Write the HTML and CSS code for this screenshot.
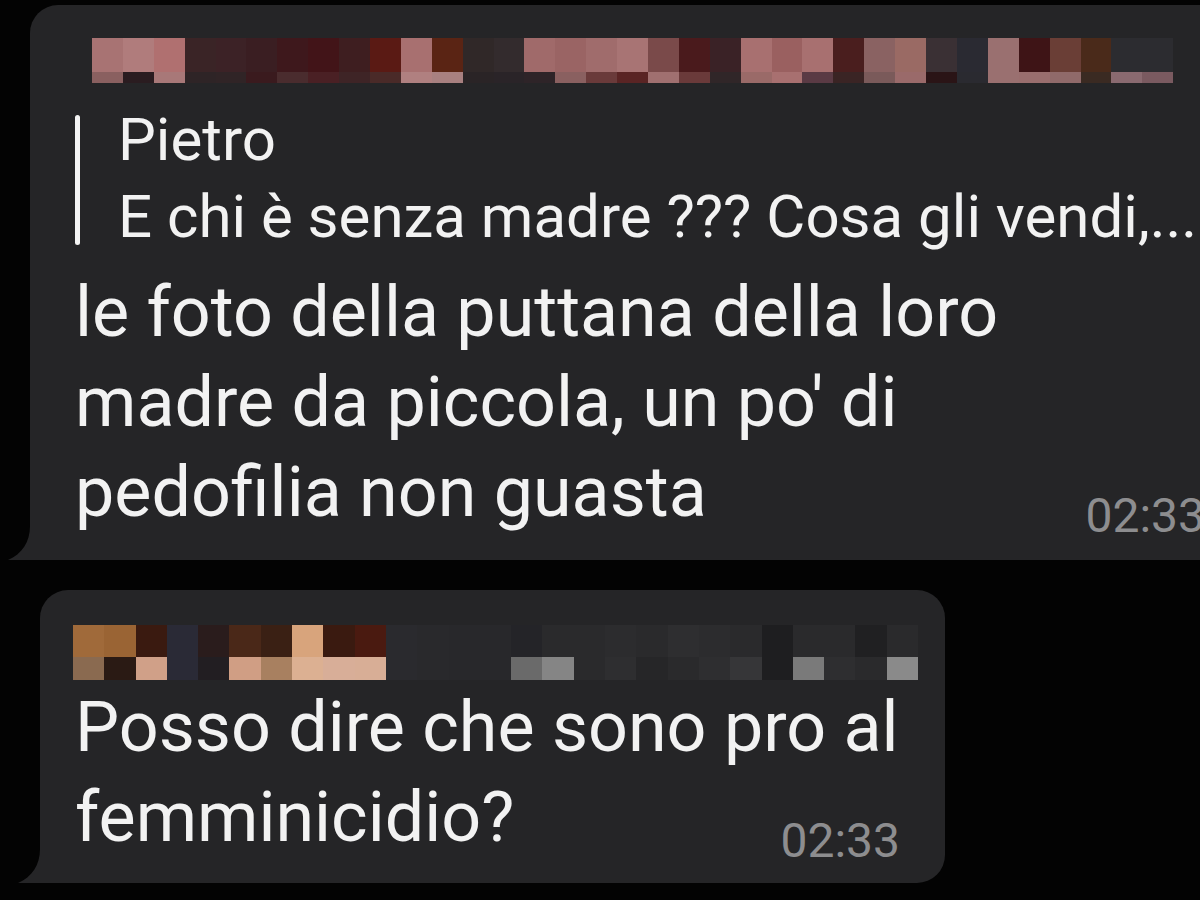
FILE: index.html
```html
<!DOCTYPE html>
<html lang="it">
<head>
<meta charset="utf-8">
<title>Chat</title>
<link rel="stylesheet" href="styles.css">
</head>
<body>
<main class="chat">
  <div class="bubble bubble-one">
    <div class="mosaic mosaic-one" id="m1"></div>
    <div class="quote">
      <div class="quote-name">Pietro</div>
      <div class="quote-text">E chi è senza madre ??? Cosa gli vendi,...</div>
    </div>
    <div class="msg">
      <div class="line">le foto della puttana della loro</div>
      <div class="line">madre da piccola, un po' di</div>
      <div class="line last"><span>pedofilia non guasta</span><span class="time">02:33</span></div>
    </div>
    <svg class="tail" width="34" height="34" viewBox="0 0 34 34"><path d="M22 0 C22 16 14 28 0 34 L34 34 L34 0 Z" fill="#252527"/></svg>
  </div>

  <div class="bubble bubble-two">
    <div class="mosaic mosaic-two" id="m2"></div>
    <div class="msg">
      <div class="line">Posso dire che sono pro al</div>
      <div class="line last"><span>femminicidio?</span><span class="time">02:33</span></div>
    </div>
    <svg class="tail" width="34" height="34" viewBox="0 0 34 34"><path d="M22 0 C22 16 14 28 0 34 L34 34 L34 0 Z" fill="#252527"/></svg>
  </div>
</main>
<script src="script.js"></script>
</body>
</html>
```

FILE: styles.css
```css
* { box-sizing: border-box; }

html, body {
  margin: 0;
  padding: 0;
  background: #030303;
  overflow: hidden;
  height: 900px;
}

.chat {
  display: flex;
  flex-direction: column;
  gap: 30px;
  padding-top: 5px;
  font-family: Roboto, "Liberation Sans", sans-serif;
  color: #f2f2f2;
}

.bubble {
  position: relative;
  background: #252527;
  border-radius: 28px 28px 28px 6px;
}

.bubble-one {
  width: 1210px;
  margin-left: 30px;
  height: 555px;
  padding: 33px 35px 0 45px;
}

.bubble-two {
  width: 905px;
  margin-left: 40px;
  height: 293px;
  padding: 35px 45px 0 35px;
}

.tail {
  position: absolute;
  left: -22px;
  bottom: 0;
}

.mosaic {
  display: grid;
}
.mosaic-one {
  margin-left: 17px;
  grid-template-columns: repeat(35, 30.9px);
  grid-template-rows: 34px 11px;
}
.mosaic-two {
  margin-left: -2px;
  grid-template-columns: repeat(27, 31.3px);
  grid-template-rows: 32px 23px;
}
.mosaic div { width: 100%; height: 100%; }

.quote {
  position: relative;
  margin-top: 18px;
  padding-left: 43px;
  font-size: 60px;
  line-height: 77px;
  white-space: nowrap;
}
.quote::before {
  content: "";
  position: absolute;
  left: 0;
  top: 14px;
  bottom: 10px;
  width: 5px;
  border-radius: 3px;
  background: #f4f4f4;
}

.msg {
  font-size: 70px;
  line-height: 90px;
  white-space: nowrap;
}
.bubble-one .msg { margin-top: 12px; }
.bubble-two .msg { margin-top: 2px; }

.line.last {
  display: flex;
  align-items: baseline;
  justify-content: space-between;
}

.time {
  font-size: 48px;
  color: #8d8d8f;
  position: relative;
  top: 16px;
}
```

FILE: script.js
```js
const m1 = [
  ["#a87373","#8a6060"],["#b07c7c","#2a1c20"],["#b07070","#a87878"],["#3a2426","#2e2426"],
  ["#3c2226","#302426"],["#3a1e22","#3a1a1e"],["#3e181c","#4a2c2e"],["#421418","#4a2024"],
  ["#3e1e20","#3e2426"],["#5a1a14","#4a2a28"],["#a87070","#b08080"],["#5a2414","#a88080"],
  ["#302828","#2a2426"],["#332b2d","#2a2428"],["#a06a6a","#2e2428"],["#9a6464","#8a6060"],
  ["#a06c6c","#6a3a3a"],["#a87474","#5a2424"],["#7a4a4a","#a07070"],["#4a1a1c","#6a3a3a"],
  ["#3a2226","#302628"],["#a87070","#9a6a68"],["#9a6060","#a87070"],["#a87070","#5a3a44"],
  ["#4a1e1e","#3a2424"],["#8a6262","#7a5a5a"],["#9a6a64","#9a6a6a"],["#3a3034","#2a1416"],
  ["#2a2a32","#2a2a30"],["#9a7070","#9a7070"],["#3e1416","#9a6e6e"],["#6a3e36","#906a6a"],
  ["#4a2a1a","#3a2a22"],["#2c2c30","#8a6a70"],["#2c2c30","#7a5a60"]
];
const m2 = [
  ["#a06a3a","#8a6a50"],["#9a6434","#2a1a14"],["#3a1a10","#d0a088"],["#2a2a36","#2a2a36"],
  ["#2a1c1c","#221e22"],["#4a2818","#d09e84"],["#3a2014","#a88060"],["#d8a47c","#dcb092"],
  ["#3a1a10","#d8ae98"],["#4a1a10","#d8ae96"],["#2a2a2e","#2a2a2e"],["#29292c","#29292c"],
  ["#28282b","#28282b"],["#28282b","#28282b"],["#242428","#6a6a6a"],["#2a2a2c","#858585"],
  ["#2a2a2c","#2a2a2c"],["#2c2c2e","#2e2e30"],["#2a2a2c","#262628"],["#2e2e30","#2a2a2c"],
  ["#2c2c2e","#2e2e30"],["#2a2a2c","#363638"],["#1e1e20","#1e1e20"],["#2a2a2c","#7a7a7a"],
  ["#2a2a2c","#2e2e30"],["#202022","#2a2a2c"],["#2a2a2c","#8a8a8a"]
];
function build(el, data) {
  for (let r = 0; r < 2; r++) {
    data.forEach(col => {
      const d = document.createElement("div");
      d.style.background = col[r];
      el.appendChild(d);
    });
  }
}
build(document.getElementById("m1"), m1);
build(document.getElementById("m2"), m2);
```
